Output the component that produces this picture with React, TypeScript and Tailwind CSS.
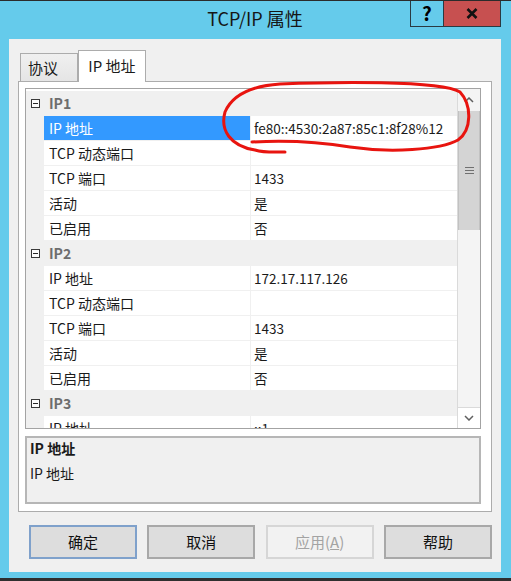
import React from "react";

type Row = { label: string; value: string };
type Group = { name: string; rows: Row[] };

const groups: Group[] = [
  {
    name: "IP1",
    rows: [
      { label: "IP 地址", value: "fe80::4530:2a87:85c1:8f28%12" },
      { label: "TCP 动态端口", value: "" },
      { label: "TCP 端口", value: "1433" },
      { label: "活动", value: "是" },
      { label: "已启用", value: "否" },
    ],
  },
  {
    name: "IP2",
    rows: [
      { label: "IP 地址", value: "172.17.117.126" },
      { label: "TCP 动态端口", value: "" },
      { label: "TCP 端口", value: "1433" },
      { label: "活动", value: "是" },
      { label: "已启用", value: "否" },
    ],
  },
  {
    name: "IP3",
    rows: [
      { label: "IP 地址", value: "::1" },
      { label: "TCP 动态端口", value: "" },
    ],
  },
];

const Collapse = () => (
  <div className="w-[9px] h-[9px] border border-[#3A3A3A] bg-white flex items-center justify-center">
    <div className="w-[5px] h-px bg-[#2A2A2A]" />
  </div>
);

const Chevron = ({ up }: { up?: boolean }) => (
  <svg width="10" height="6" viewBox="0 0 10 6">
    <polyline
      points={up ? "1,5 5,1 9,5" : "1,1 5,5 9,1"}
      fill="none"
      stroke="#606060"
      strokeWidth="1.5"
    />
  </svg>
);

const PropertyGrid = () => (
  <div className="flex h-[341px] border border-[#A3A3A3] bg-white overflow-hidden">
    <div className="w-[431px] shrink-0 overflow-hidden pt-[2px] text-[14px] text-[#1A1A1A]">
      {groups.map((g, gi) => (
        <div key={g.name}>
          <div className="flex h-[25px] bg-[#F0F0F0]">
            <div className="w-[18px] shrink-0 flex items-center justify-center pb-px">
              <Collapse />
            </div>
            <div className="flex-1 flex items-center pl-[5px] font-bold text-[#6D6D6D] border-b border-[#F0F0F0]">
              {g.name}
            </div>
          </div>
          {g.rows.map((r, i) => {
            const selected = gi === 0 && i === 0;
            return (
              <div key={r.label} className="flex h-[25px]">
                <div className="w-[18px] shrink-0 bg-[#F0F0F0]" />
                <div
                  className={`w-[206px] shrink-0 flex items-center pl-[5px] border-b border-[#F0F0F0] ${
                    selected ? "bg-[#3399FF] text-white" : ""
                  }`}
                >
                  {r.label}
                </div>
                <div className="w-[207px] shrink-0 overflow-hidden flex items-center pl-[3px] border-l border-b border-[#F0F0F0] whitespace-nowrap text-[13.5px]">
                  {r.value}
                </div>
              </div>
            );
          })}
        </div>
      ))}
    </div>
    <div className="flex-1 flex flex-col bg-[#F4F4F4] border-l border-[#DADADA]">
      <div className="h-[22px] flex items-center justify-center">
        <Chevron up />
      </div>
      <div className="h-[119px] bg-[#D4D4D4] border-x border-[#C2C2C2] flex flex-col items-center justify-center gap-[2px]">
        <div className="w-[9px] h-px bg-[#707070]" />
        <div className="w-[9px] h-px bg-[#707070]" />
        <div className="w-[9px] h-px bg-[#707070]" />
      </div>
      <div className="flex-1" />
      <div className="h-[21px] flex items-center justify-center border-t border-[#DADADA] bg-white">
        <Chevron />
      </div>
    </div>
  </div>
);

const Button = ({
  children,
  variant,
}: {
  children: React.ReactNode;
  variant?: "default" | "disabled";
}) => (
  <div
    className={`w-[108px] h-[34px] flex items-center justify-center border-2 text-[15px] ${
      variant === "default"
        ? "border-[#7FA1CB] bg-[#DDDDDD] text-[#111]"
        : variant === "disabled"
        ? "border-[#D6D6D6] bg-[#F2F2F2] text-[#A3A3A3]"
        : "border-[#A8A8A8] bg-[#DDDDDD] text-[#111]"
    }`}
  >
    {children}
  </div>
);

export default function App() {
  return (
    <div className="relative w-[511px] h-[581px] bg-[#65CBEB] border-t border-[#2B2B2B] border-b-[3px] border-b-[#2F2F2F] pl-[9px] pr-[10px] flex flex-col font-['Noto_Sans_CJK_SC','Noto_Sans',sans-serif]">
      <div className="grid grid-cols-[1fr_auto_1fr] h-[38px]">
        <div />
        <div className="flex items-center pb-[4px] text-[18px] text-[#161616]">TCP/IP 属性</div>
        <div className="flex justify-end items-start">
          <div className="flex h-[26px] border-x border-b border-[#2A3A42]">
            <div className="w-[33px] flex items-center justify-center border-r border-[#2A3A42] text-[19px] font-bold text-black leading-none pb-[2px]">
              ?
            </div>
            <div className="w-[56px] flex items-center justify-center bg-[#C75050]">
              <svg width="12" height="11" viewBox="0 0 12 11">
                <path d="M1.5 1 L10.5 10 M10.5 1 L1.5 10" stroke="#111" strokeWidth="2.6" />
              </svg>
            </div>
          </div>
        </div>
      </div>

      <div className="h-[533px] bg-[#F0F0F0] px-[9px] pt-[11px] flex flex-col">
        <div className="flex items-end h-[31px] pl-[2px] text-[15px] text-[#1A1A1A]">
          <div className="w-[58px] h-[28px] border border-b-0 border-[#ACACAC] bg-gradient-to-b from-[#F0F0F0] to-[#E5E5E5] pl-[7px] pt-[2px] flex items-center">
            协议
          </div>
          <div className="relative z-10 -mb-px w-[68px] h-[32px] border border-b-0 border-[#ACACAC] bg-white flex items-center justify-center">
            IP 地址
          </div>
        </div>

        <div className="h-[431px] border border-[#ACACAC] bg-white pt-[6px] pl-[6px] pr-[10px] pb-[7px] flex flex-col">
          <PropertyGrid />
          <div className="mt-[7px] h-[68px] border-2 border-[#B6B6B6] bg-[#F0F0F0] pl-[3px] text-[14px] text-[#1A1A1A] flex flex-col">
            <div className="h-[21px] flex items-center font-bold">IP 地址</div>
            <div className="h-[28px] flex items-center">IP 地址</div>
          </div>
        </div>

        <div className="mt-[13px] flex justify-between pl-[11px]">
          <Button variant="default">确定</Button>
          <Button>取消</Button>
          <Button variant="disabled">
            <span>
              应用(<span className="underline">A</span>)
            </span>
          </Button>
          <Button>帮助</Button>
        </div>
      </div>

      <svg
        className="absolute left-0 top-[-1px] pointer-events-none"
        width="511"
        height="581"
        viewBox="0 0 511 581"
      >
        <path
          d="M 252 142 C 290 140, 320 142, 350 147 C 390 153, 440 150, 458 140 C 472 130, 472 105, 460 92 C 440 80, 330 82, 280 84 C 250 86, 232 96, 225 112 C 220 130, 230 146, 255 150 C 265 153, 275 152, 285 152"
          fill="none"
          stroke="#E8140F"
          strokeWidth="3"
          strokeLinecap="round"
        />
      </svg>
    </div>
  );
}
